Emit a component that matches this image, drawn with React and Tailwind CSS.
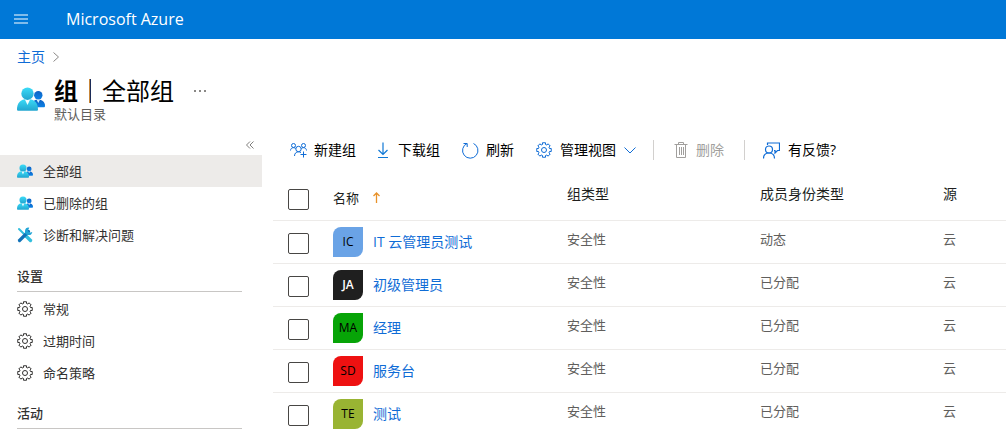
import { useState } from "react";

const groups = [
  { initials: "IC", name: "IT 云管理员测试", type: "安全性", membership: "动态", source: "云", color: "bg-[#6aa3e6] text-black" },
  { initials: "JA", name: "初级管理员", type: "安全性", membership: "已分配", source: "云", color: "bg-[#1f1f1f] text-white font-semibold" },
  { initials: "MA", name: "经理", type: "安全性", membership: "已分配", source: "云", color: "bg-[#07a407] text-black" },
  { initials: "SD", name: "服务台", type: "安全性", membership: "已分配", source: "云", color: "bg-[#ee1111] text-black" },
  { initials: "TE", name: "测试", type: "安全性", membership: "已分配", source: "云", color: "bg-[#99b433] text-black" },
];

function GroupIcon({ className, id }) {
  return (
    <svg viewBox="0 0 28 24" className={className} aria-hidden="true">
      <defs>
        <linearGradient id={id} x1="0" y1="0" x2="0" y2="1">
          <stop offset="0" stopColor="#3bdcf8" />
          <stop offset="1" stopColor="#22a5cf" />
        </linearGradient>
        <linearGradient id={`${id}-back`} x1="0" y1="0" x2="0" y2="1">
          <stop offset="0" stopColor="#0f62c4" />
          <stop offset="1" stopColor="#0b82e6" />
        </linearGradient>
      </defs>
      <circle cx="21.300" cy="8.300" r="4.200" fill={`url(#${id}-back)`} />
      <path d="M14 20c0-4.500 3-7.500 7-7.500s7 2.500 7 6.200c0 1-.5 1.500-1.500 1.500H14z" fill={`url(#${id}-back)`} />
      <path d="M19.500 12.500l1.800 3.500 1.800-3.500z" fill="#d4f1fb" />
      <path d="M0 22.500C0 16.500 3 12 10.500 12S21 16.500 21 22.500c0 1-.5 1.300-1.500 1.300h-18c-1 0-1.500-.3-1.500-1.300z" fill={`url(#${id})`} />
      <path d="M7.800 12.200l2.700 5.800 2.700-5.800z" fill="#f2fdff" />
      <circle cx="10.500" cy="6.700" r="6.200" fill={`url(#${id})`} />
    </svg>
  );
}

function ToolsIcon({ className }) {
  return (
    <svg viewBox="0 0 16 16" className={className} fill="none" aria-hidden="true">
      <path d="M2 2l5 5" stroke="#32bedd" strokeWidth="2" strokeLinecap="round" />
      <path d="M9 9l4.500 4.500" stroke="#32bedd" strokeWidth="3.400" strokeLinecap="round" />
      <path d="M2.500 13.500L11.500 4.500" stroke="#1272b8" strokeWidth="3.200" strokeLinecap="round" />
      <path d="M12.300.7a3.700 3.700 0 1 0 3 4.300l-2.600.8-2-2z" fill="#22a5d6" />
    </svg>
  );
}

// Eight broad teeth: each one is a pair of outer points between two inner ones
const gearPoints = Array.from({ length: 8 }, (_, i) =>
  [[5.7, -15], [7.4, -12], [7.4, 12], [5.7, 15]]
    .map(([r, offset]) => {
      const a = ((i * 45 + offset) * Math.PI) / 180;
      return `${(8 + r * Math.cos(a)).toFixed(2)},${(8 + r * Math.sin(a)).toFixed(2)}`;
    })
    .join(" ")
).join(" ");

function GearIcon({ className }) {
  return (
    <svg viewBox="0 0 16 16" className={className} fill="none" stroke="currentColor" strokeLinejoin="round" aria-hidden="true">
      <polygon points={gearPoints} />
      <circle cx="8" cy="8" r="2.500" />
    </svg>
  );
}

function AddGroupIcon() {
  return (
    <svg viewBox="0 0 17 16" className="w-[17px] h-4" fill="none" stroke="#0f6cd6" aria-hidden="true">
      <circle cx="3.500" cy="3.500" r="2" />
      <circle cx="13.500" cy="3.500" r="2" />
      <circle cx="8.500" cy="7" r="2.700" />
      <path d="M.5 8.500C.6 6.700 1.800 5.700 3.500 5.700c.9 0 1.600.3 2.200.8M16.500 8.500c-.1-1.800-1.300-2.800-3-2.800-.9 0-1.600.3-2.200.8M4.500 14c0-2.600 1.700-4.200 4-4.200 1 0 1.900.3 2.500.8M13.500 9.500v6M10.500 12.500h6" />
    </svg>
  );
}

function DownloadIcon() {
  return (
    <svg viewBox="0 0 12 17" className="w-3 h-[17px]" fill="none" stroke="#0f78d6" strokeWidth="1.200" aria-hidden="true">
      <path d="M6 .5v12M1.500 8L6 12.500 10.500 8M1 15.500h10" />
    </svg>
  );
}

function RefreshIcon() {
  return (
    <svg viewBox="0 0 17 17" className="size-[17px]" fill="none" stroke="#0f6cd6" aria-hidden="true">
      <path d="M11.500 1.500A7.700 7.700 0 1 1 5 1.500M1.500 1.500H5.200V5" />
    </svg>
  );
}

function TrashIcon() {
  return (
    <svg viewBox="0 0 14 16" className="w-[14px] h-4" fill="none" stroke="#a19f9d" aria-hidden="true">
      <path d="M.5 2.500h13M4.500 2.500v-2h5v2M2.500 2.500v13h9v-13M5.500 5v8M7.500 5v8M9.500 5v8" />
    </svg>
  );
}

function FeedbackIcon() {
  return (
    <svg viewBox="0 0 17 17" className="size-[17px]" fill="none" stroke="#0f6cd6" strokeWidth="1.200" aria-hidden="true">
      <path d="M4.500 3V1h12v7.500h-2l-2.500 2.500V8.500h-1M.5 16.500c0-3.300 2.200-5.500 5.500-5.500s5.500 2.200 5.500 5.500" />
      <circle cx="6" cy="7.500" r="3.500" />
    </svg>
  );
}

function ChevronDown() {
  return (
    <svg viewBox="0 0 12 7" className="w-3 h-[7px]" fill="none" stroke="#0f6cd6" aria-hidden="true">
      <path d="M.5.5L6 6 11.500.5" />
    </svg>
  );
}

const menuLink = "flex h-8 items-center gap-[10px] pl-[17px]";
const menuHeading = "ml-[17px] mr-5 flex h-8 items-center border-b border-[#c8c6c4] font-medium";

function Sidebar() {
  return (
    <nav className="w-[262px] shrink-0 text-[13px] text-[#323130]">
      <div className="flex h-[21px] items-center justify-end pr-2">
        <button type="button" aria-label="折叠菜单" className="text-[#605e5c]">
          <svg viewBox="0 0 8 8" className="size-2" fill="none" stroke="currentColor" strokeWidth="0.8">
            <path d="M4 .5L.5 4 4 7.500M7.500.5L4 4l3.500 3.500" />
          </svg>
        </button>
      </div>
      <a href="#all" className={`${menuLink} bg-[#edebe9]`}>
        <GroupIcon id="menu-all" className="w-4 h-[14px]" />
        全部组
      </a>
      <a href="#deleted" className={menuLink}>
        <GroupIcon id="menu-deleted" className="w-4 h-[14px]" />
        已删除的组
      </a>
      <a href="#diagnose" className={menuLink}>
        <ToolsIcon className="size-4" />
        诊断和解决问题
      </a>

      <h2 className={`${menuHeading} mt-[9px]`}>设置</h2>
      <div className="pt-px">
        {["常规", "过期时间", "命名策略"].map((label) => (
          <a key={label} href="#settings" className={menuLink}>
            <GearIcon className="size-4" />
            {label}
          </a>
        ))}
      </div>

      <h2 className={`${menuHeading} mt-2`}>活动</h2>
    </nav>
  );
}

function CommandBar() {
  return (
    <div className="flex h-8 items-center pl-[17px] text-black">
      <button type="button" className="flex items-center gap-[7px]">
        <AddGroupIcon />
        新建组
      </button>
      <button type="button" className="ml-[21px] flex items-center gap-[9px]">
        <DownloadIcon />
        下载组
      </button>
      <button type="button" className="ml-[22px] flex items-center gap-[7px]">
        <RefreshIcon />
        刷新
      </button>
      <button type="button" className="ml-[22px] flex items-center gap-2">
        <GearIcon className="size-4 text-[#0f6cd6]" />
        管理视图
        <ChevronDown />
      </button>
      <span className="ml-[17px] h-5 w-px bg-[#d2d0ce]" />
      <button type="button" disabled className="ml-5 flex items-center gap-2 text-[#a19f9d]">
        <TrashIcon />
        删除
      </button>
      <span className="ml-5 h-5 w-px bg-[#d2d0ce]" />
      <button type="button" className="ml-[18px] flex items-center gap-2">
        <FeedbackIcon />
        有反馈?
      </button>
    </div>
  );
}

function Checkbox({ label, checked, onChange }) {
  return (
    <input
      type="checkbox"
      aria-label={label}
      checked={checked}
      onChange={onChange}
      className="block size-[21px] appearance-none rounded-xs border border-[#484644] bg-white checked:bg-[#0078d4]"
    />
  );
}

function GroupTable() {
  const [selected, setSelected] = useState([]);
  const allSelected = selected.length === groups.length;

  const toggle = (id) => {
    setSelected(selected.includes(id) ? selected.filter((s) => s !== id) : [...selected, id]);
  };

  return (
    <table className="mt-[10px] w-full table-fixed text-left text-[#605e5c]">
      <thead className="text-[#201f1e]">
        <tr className="h-11 border-b border-[#edebe9]">
          <th className="w-[60px] pl-[15px] pt-[3px]">
            <Checkbox
              label="全选"
              checked={allSelected}
              onChange={() => setSelected(allSelected ? [] : groups.map((g) => g.initials))}
            />
          </th>
          <th className="w-[234px] font-normal">
            <button type="button" className="flex items-center gap-[14px] text-[13px]">
              名称
              <svg viewBox="0 0 7 11" className="w-[7px] h-[11px]" fill="none" stroke="#e8922a" strokeWidth="1.300" aria-hidden="true">
                <path d="M3.500 11V1M.5 4l3-3 3 3" />
              </svg>
            </button>
          </th>
          <th className="w-[193px] pb-2 font-normal">组类型</th>
          <th className="w-[183px] pb-2 font-normal">成员身份类型</th>
          <th className="pb-2 font-normal">源</th>
        </tr>
      </thead>
      <tbody>
        {groups.map((group) => (
          <tr key={group.initials} className="h-[43px] border-b border-[#edebe9]">
            <td className="pl-[15px] pt-[3px]">
              <Checkbox
                label={group.name}
                checked={selected.includes(group.initials)}
                onChange={() => toggle(group.initials)}
              />
            </td>
            <td>
              <a href="#group" className="flex items-center gap-[10px] text-[#0f6cd6]">
                <span className={`flex size-[30px] items-center justify-center rounded-tl-lg rounded-br-lg text-xs ${group.color}`}>
                  {group.initials}
                </span>
                {group.name}
              </a>
            </td>
            <td className="pb-[6px] text-[13px]">{group.type}</td>
            <td className="pb-[6px] text-[13px]">{group.membership}</td>
            <td className="pb-[6px] text-[13px]">{group.source}</td>
          </tr>
        ))}
      </tbody>
    </table>
  );
}

export default function App() {
  return (
    <div className="h-screen overflow-hidden bg-white font-['Open_Sans','Noto_Sans_CJK_SC',sans-serif] text-[14px] leading-5">
      <header className="flex h-[39px] items-center gap-[38px] bg-[#0078d7] pb-px pl-[14px] text-white">
        <button type="button" aria-label="菜单" className="flex flex-col gap-[2px]">
          <span className="h-[2px] w-[14px] bg-white/50" />
          <span className="h-[2px] w-[14px] bg-white/50" />
          <span className="h-[2px] w-[14px] bg-white/50" />
        </button>
        <a href="#home" className="text-base">Microsoft Azure</a>
      </header>

      <div className="flex h-9 items-center gap-2 pl-[17px]">
        <a href="#home" className="text-[#0f6cd6]">主页</a>
        <svg viewBox="0 0 6 10" className="w-[6px] h-[10px]" fill="none" stroke="#8a8886" aria-hidden="true">
          <path d="M.5.5L5.500 5l-5 4.500" />
        </svg>
      </div>

      <div className="flex h-[59px] items-start gap-[9px] pl-[17px]">
        <GroupIcon id="title-icon" className="mt-3 w-7 h-6" />
        <div>
          <div className="flex items-center gap-5">
            <h1 className="flex items-center gap-[11px] text-2xl leading-8 text-black">
              <b>组</b>
              <span className="h-6 w-[2px] border-l border-[#c8873a] bg-[#1c2c58]" />
              全部组
            </h1>
            <button type="button" aria-label="更多" className="flex gap-[3px]">
              <span className="size-[2px] bg-[#8a8886]" />
              <span className="size-[2px] bg-[#8a8886]" />
              <span className="size-[2px] bg-[#8a8886]" />
            </button>
          </div>
          <p className="text-[13px] leading-[14px] text-[#605e5c]">默认目录</p>
        </div>
      </div>

      <div className="flex gap-[11px]">
        <Sidebar />
        <main className="min-w-0 grow">
          <CommandBar />
          <GroupTable />
        </main>
      </div>
    </div>
  );
}
